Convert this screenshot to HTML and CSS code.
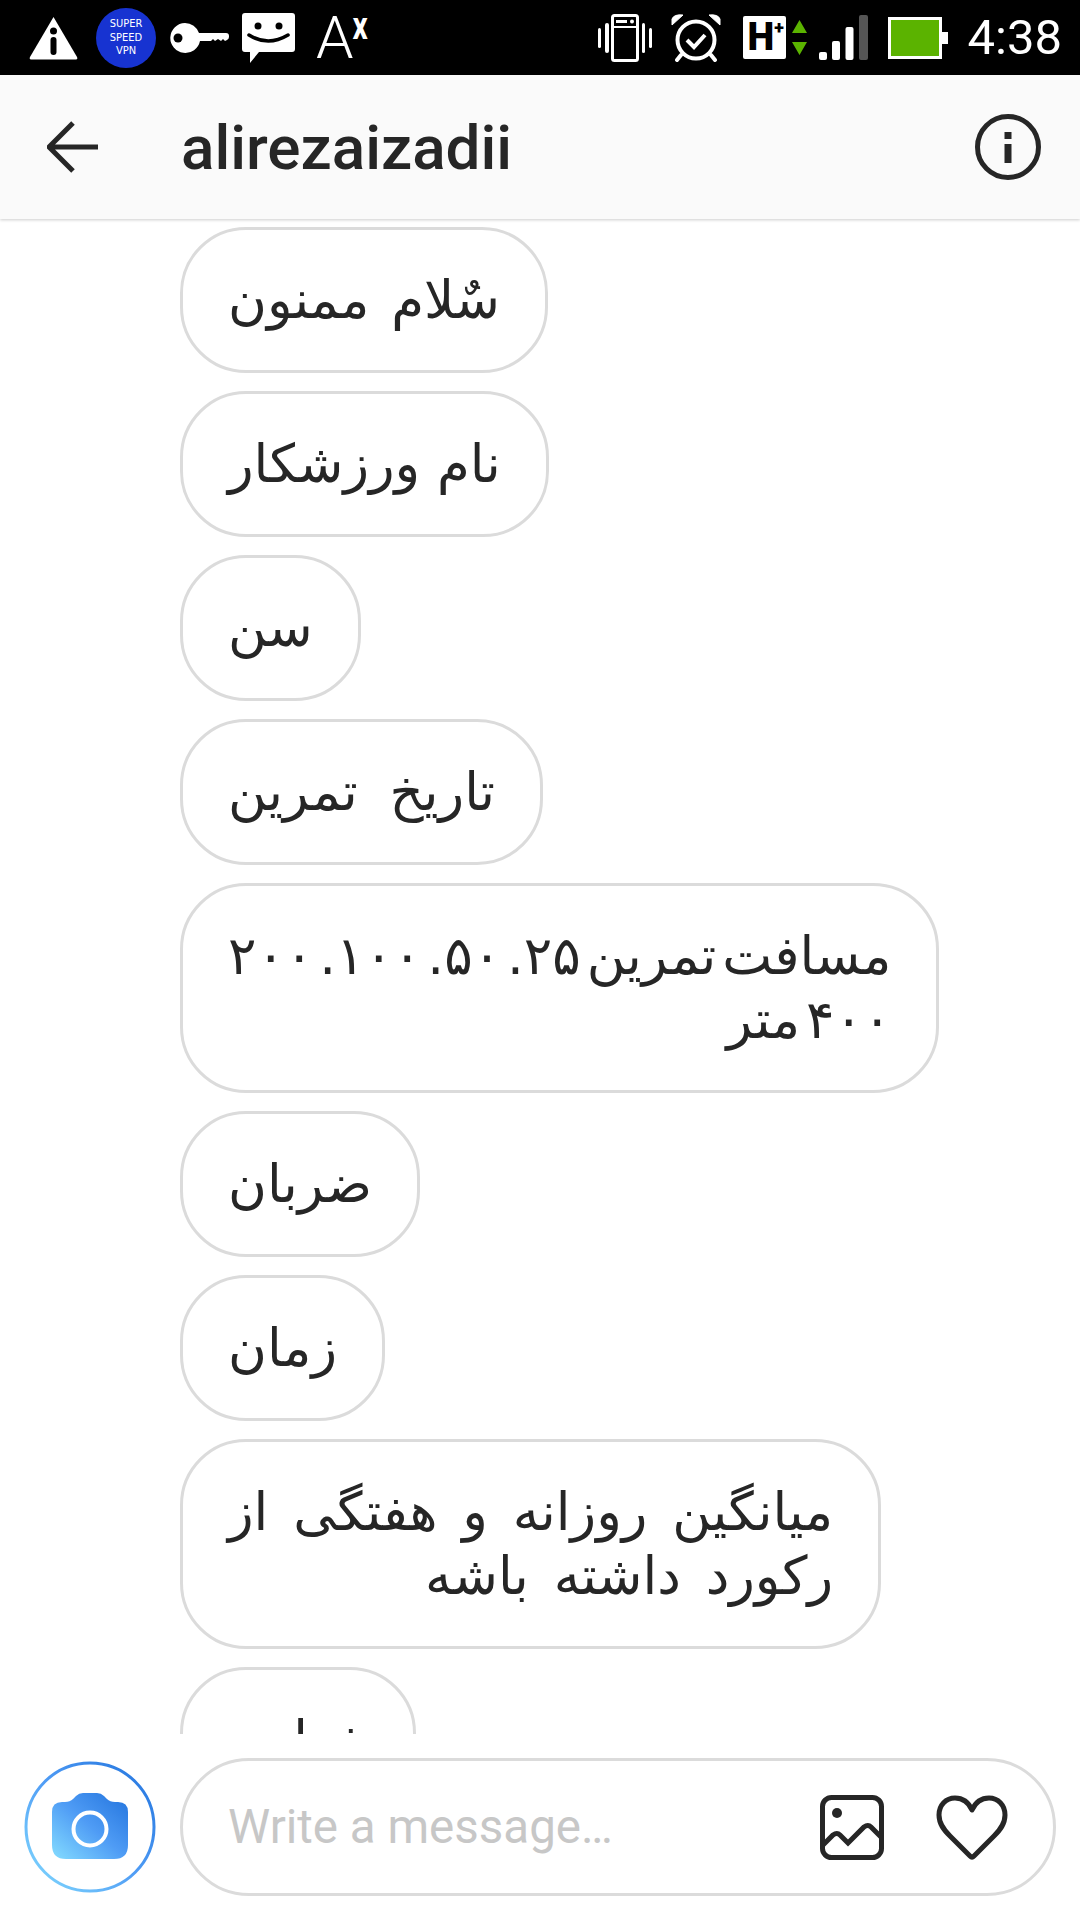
FILE: index.html
```html
<!DOCTYPE html>
<html lang="en">
<head>
    <meta charset="UTF-8">
    <meta name="viewport" content="width=device-width, initial-scale=1">
    <title>alirezaizadii - Direct</title>
    <link rel="stylesheet" href="styles.css">
</head>
<body>
    <div class="page">
        <div class="status-bar">
            <div class="status-left">
                <svg width="49" height="44" viewBox="0 0 49 44"><path d="M24.500 1 48 41q1 2-1 2.500H2Q0 43 1 41Z" fill="#fff"/><circle cx="24.500" cy="15" r="3.500" fill="#000"/><rect x="21.500" y="21" width="6" height="18" rx="3" fill="#000"/></svg>
                <div class="vpn-badge"><span>SUPER</span><span>SPEED</span><span>VPN</span></div>
                <svg width="60" height="32" viewBox="0 0 60 32"><path d="M16 1a15 15 0 0 1 14 10h27q3 0 3 3v1q0 2-2 3l-2 1-2-2-2 2-3-2-3 2-2-2-2 2-11 0a15 15 0 1 1-15-18Z" fill="#fff"/><circle cx="9" cy="16" r="4.500" fill="#000"/></svg>
                <svg width="53" height="50" viewBox="0 0 53 50"><path d="M3 0h47q3 0 3 3v33q0 3-3 3H17l-9 11v-11H3q-3 0-3-3V3q0-3 3-3Z" fill="#fff"/><circle cx="16" cy="13" r="3.500" fill="#000"/><circle cx="37" cy="13" r="3.500" fill="#000"/><path d="M7 22q19 12 39 0" fill="none" stroke="#000" stroke-width="3.500" stroke-linecap="round"/></svg>
                <div class="font-icon"><span class="font-a">A</span><span class="font-x">x</span></div>
            </div>
            <div class="status-right">
                <svg class="vibrate-icon" width="56" height="48" viewBox="0 0 56 48"><g fill="#fff"><rect x="1" y="14" width="3" height="20" rx="1.500"/><rect x="8" y="9" width="4" height="30" rx="2"/><rect x="45" y="9" width="3" height="30" rx="1.500"/><rect x="52" y="14" width="3" height="20" rx="1.500"/></g><rect x="15.500" y="1.500" width="25" height="45" rx="2" fill="none" stroke="#fff" stroke-width="3"/><rect x="19" y="6" width="11" height="3" fill="#fff"/><circle cx="35" cy="7.500" r="2" fill="#fff"/><rect x="15" y="12" width="26" height="2" fill="#fff"/></svg>
                <svg width="50" height="48" viewBox="0 0 50 48"><circle cx="25" cy="26" r="18.500" fill="none" stroke="#fff" stroke-width="4"/><path d="M1 11 12 1Q3 0 1 5Z M49 11 38 1Q47 0 49 5Z" fill="#fff" stroke="#fff" stroke-width="1"/><path d="M10 41 6 46M40 41l4 5" stroke="#fff" stroke-width="4" stroke-linecap="round"/><path d="m16 26 7 7 11-12" fill="none" stroke="#fff" stroke-width="4"/></svg>
                <div class="net-type">
                    <div class="net-box"><span class="net-h">H</span><span class="net-plus">+</span></div>
                    <svg width="15" height="35" viewBox="0 0 15 35"><path d="M7.500 0 15 13H0Z M7.500 35 0 22h15Z" fill="#5bb300"/></svg>
                </div>
                <svg width="49" height="46" viewBox="0 0 49 46"><g fill="#fff"><rect x="0" y="37" width="8" height="8" rx="2"/><rect x="13" y="26" width="8" height="19" rx="2"/><rect x="26.500" y="12" width="8" height="33" rx="2"/></g><rect x="40" y="0" width="9" height="45" rx="2" fill="#555"/></svg>
                <svg width="60" height="42" viewBox="0 0 60 42"><rect x="1.500" y="1.500" width="51" height="39" fill="#5bb300" stroke="#fff" stroke-width="3"/><path d="M54 15h6v12h-6Z" fill="#fff"/></svg>
                <span class="clock">4:38</span>
            </div>
        </div>

        <div class="header">
            <svg class="back-icon" width="52" height="52" viewBox="0 0 52 52"><path d="M2 26h49M26 2 2 26l24 24" fill="none" stroke="#262626" stroke-width="5"/></svg>
            <h1>alirezaizadii</h1>
            <svg class="info-icon" width="66" height="66" viewBox="0 0 66 66"><circle cx="33" cy="33" r="30.500" fill="none" stroke="#262626" stroke-width="5"/><rect x="29.500" y="18" width="7" height="7" fill="#262626"/><rect x="29.500" y="30" width="7" height="19" fill="#262626"/></svg>
        </div>

        <div class="messages">
            <div class="bubble words-sm">سٌلام ممنون</div>
            <div class="bubble">نام ورزشکار</div>
            <div class="bubble">سن</div>
            <div class="bubble words-lg">تاریخ تمرین</div>
            <div class="bubble words-tight">مسافت تمرین ۲۵. ۵۰. ۱۰۰. ۲۰۰<br>۴۰۰ متر</div>
            <div class="bubble">ضربان</div>
            <div class="bubble">زمان</div>
            <div class="bubble words-md">میانگین روزانه و هفتگی از<br>رکورد داشته باشه</div>
            <div class="bubble bubble-last">خواب</div>
        </div>

        <div class="composer">
            <div class="camera-btn">
                <svg width="132" height="132" viewBox="-1 -1 132 132">
                    <defs>
                        <linearGradient id="camGrad" x1="0" y1="1" x2="1" y2="0">
                            <stop offset="0" stop-color="#84dcff"/>
                            <stop offset="0.5" stop-color="#4f9cf5"/>
                            <stop offset="1" stop-color="#2273dd"/>
                        </linearGradient>
                    </defs>
                    <circle cx="65" cy="65" r="64" fill="#fff" stroke="url(#camGrad)" stroke-width="3"/>
                    <path d="M27 50q0-10 10-10h3q5 0 8-3l3-3q3-3 7-3h14q4 0 7 3l3 3q3 3 8 3h3q10 0 10 10v33q0 14-14 14H41Q27 97 27 83Z" fill="url(#camGrad)"/>
                    <circle cx="65" cy="67" r="16.500" fill="none" stroke="#fff" stroke-width="4"/>
                </svg>
            </div>
            <div class="input-box">
                <span class="placeholder">Write a message…</span>
                <svg width="64" height="65" viewBox="0 0 64 65"><rect x="2.500" y="2.500" width="59" height="60" rx="9" fill="none" stroke="#262626" stroke-width="5"/><circle cx="17" cy="18" r="5" fill="#262626"/><path d="M3 50 13 40q4-3 7 0l8 8 16-16q4-3 7 0l10 10" fill="none" stroke="#262626" stroke-width="5"/></svg>
                <svg width="72" height="65" viewBox="0 0 72 65"><path d="M36 15C32 6 26 3 19 3 10 3 3 10 3 20c0 9 5 15 11 21l20 20q2 2 4 0l20-20c6-6 11-12 11-21C69 10 62 3 53 3c-7 0-13 3-17 12Z" fill="none" stroke="#262626" stroke-width="5" stroke-linejoin="round"/></svg>
            </div>
        </div>
    </div>
</body>
</html>
```

FILE: styles.css
```css
* {
    box-sizing: border-box;
}
body {
    margin: 0;
    background: white;
    font-family: 'Roboto', sans-serif;
    color: #262626;
}
svg {
    display: block;
    flex: none;
}
.page {
    display: flex;
    flex-direction: column;
    width: 1080px;
    height: 1920px;
    overflow: hidden;
}

/* status bar */
.status-bar {
    display: flex;
    justify-content: space-between;
    align-items: center;
    flex: none;
    height: 75px;
    padding: 0 18px 0 29px;
    background-color: black;
    color: white;
}
.status-left {
    display: flex;
    align-items: center;
    gap: 13px;
}
.status-right {
    display: flex;
    align-items: center;
    gap: 20px;
}
.vibrate-icon {
    margin-right: -2px;
}
.vpn-badge {
    display: flex;
    flex-direction: column;
    align-items: center;
    justify-content: center;
    width: 60px;
    height: 60px;
    margin-left: 5px;
    border-radius: 50%;
    background-color: #1733d1;
    font-family: 'DejaVu Sans Condensed', 'DejaVu Sans', sans-serif;
    font-size: 11px;
    line-height: 13.500px;
}
.font-icon {
    display: flex;
    align-items: flex-start;
    width: 52px;
    height: 46px;
    margin-left: 8px;
}
.font-a {
    font-size: 60px;
    font-weight: 300;
    line-height: 46px;
}
.font-x {
    margin-left: -1px;
    font-size: 30px;
    font-weight: 700;
    line-height: 22px;
    transform: scaleY(1.3);
}
.net-type {
    display: flex;
    align-items: center;
    gap: 6px;
    margin: 0 -8px 0 2px;
}
.net-box {
    display: flex;
    align-items: flex-start;
    width: 43px;
    height: 43px;
    padding-left: 5px;
    border-radius: 2px;
    background-color: white;
    color: black;
    font-weight: 900;
}
.net-h {
    font-size: 38px;
    line-height: 43px;
}
.net-plus {
    font-size: 18px;
    line-height: 24px;
}
.clock {
    font-size: 49px;
    line-height: 75px;
}

/* header */
.header {
    position: relative;
    display: flex;
    align-items: center;
    flex: none;
    height: 144px;
    padding: 0 39px 0 47px;
    background-color: #fafafa;
    box-shadow: 0 1px 3px rgba(0, 0, 0, 0.2);
}
.header h1 {
    flex: 1;
    margin: 0 0 0 82px;
    font-size: 62px;
    font-weight: 500;
}

/* messages */
.messages {
    display: flex;
    flex-direction: column;
    align-items: flex-start;
    gap: 18px;
    flex: 1;
    min-height: 0;
    padding: 8px 0 0 180px;
    overflow: hidden;
}
.bubble {
    flex: none;
    padding: 38px 45px;
    border: 3px solid #dbdbdb;
    border-radius: 66px;
    direction: rtl;
    font-family: 'DejaVu Sans', sans-serif;
    font-size: 53px;
    line-height: 64px;
}
.words-sm {
    word-spacing: 5px;
}
.words-md {
    word-spacing: 8px;
}
.words-lg {
    word-spacing: 15px;
}
.words-tight {
    word-spacing: -11px;
}
.bubble-last {
    min-width: 236px;
}

/* bottom input */
.composer {
    display: flex;
    align-items: center;
    gap: 24px;
    flex: none;
    height: 186px;
    padding: 0 24px;
}
.input-box {
    display: flex;
    align-items: center;
    gap: 52px;
    flex: 1;
    height: 138px;
    padding: 0 45px;
    border: 3px solid #dbdbdb;
    border-radius: 69px;
}
.placeholder {
    flex: 1;
    color: #c7c7c7;
    font-size: 47.500px;
}
```
